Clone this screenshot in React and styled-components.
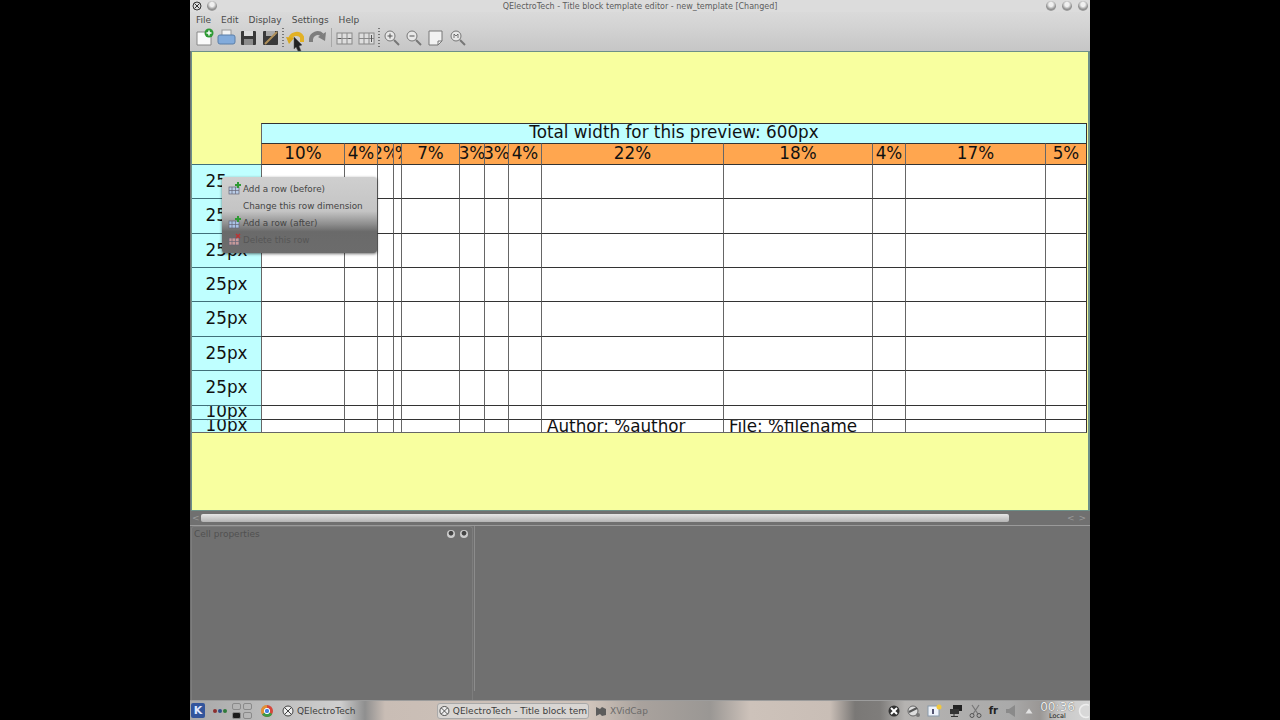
import React from 'react'
import styled, { createGlobalStyle } from 'styled-components'

const Global = createGlobalStyle`
  html, body { margin: 0; padding: 0; background: #000; }
  body { font-family: "DejaVu Sans", sans-serif; }
`

const Screen = styled.div`
  width: 1280px;
  height: 720px;
  display: flex;
  justify-content: center;
  overflow: hidden;
  background: #000;
`
const Desktop = styled.div`
  width: 900px;
  height: 720px;
  display: flex;
  flex-direction: column;
  position: relative;
  background: #707070;
`
const TitleBar = styled.div`
  height: 12px;
  display: flex;
  align-items: center;
  justify-content: space-between;
  padding: 0 2px;
  background: #dcdcdc;
`
const TitleGroup = styled.div`
  width: 42px;
  display: flex;
  align-items: center;
  justify-content: ${p => (p.$right ? 'flex-end' : 'flex-start')};
  gap: ${p => (p.$right ? '6px' : '5px')};
`
const TitleText = styled.div`
  font-size: 8px;
  color: #5c5c5c;
  white-space: nowrap;
`
const WinDot = styled.div`
  width: 10px;
  height: 10px;
  border-radius: 50%;
  background: radial-gradient(circle at 50% 35%, #f0f0f0 0 25%, #8f8f8f 60%, #b5b5b5 100%);
`
const MenuBar = styled.div`
  height: 15px;
  display: flex;
  align-items: center;
  gap: 10px;
  padding-left: 6px;
  background: linear-gradient(#dadada, #d3d3d3);
  font-size: 9px;
  color: #4a4a4a;
`
const Toolbar = styled.div`
  height: 24px;
  box-sizing: border-box;
  padding: 0 0 3px 5px;
  display: flex;
  align-items: center;
  gap: 3px;
  background: linear-gradient(#d3d3d3, #c6c6c6);
`
const ToolIcon = styled.svg`
  width: 19px;
  height: 19px;
  flex: none;
`
const Grip = styled.div`
  width: 2px;
  height: 19px;
  margin: 0 -1px;
  background: repeating-linear-gradient(#777 0 1px, transparent 1px 3px);
`
const ToolSep = styled.div`
  width: 1px;
  height: 19px;
  margin: 0 0 0 1px;
  background: #a8a8a8;
`
const Canvas = styled.div`
  height: 460px;
  margin: 0 0 0 1px;
  box-sizing: border-box;
  border: 1px solid #6d9088;
  border-right-width: 2px;
  background: #f8ff9f;
  padding-top: 71px;
`
const Sheet = styled.div`
  display: grid;
  width: 895px;
  grid-template-columns: 69px 83px 33px 16px 8px 58px 25px 24px 33px 182px 149px 33px 140px 42px;
  grid-template-rows: 20px 21px 34px 35px 34px 34px 35px 34px 35px 14px 14px;
  color: #111;
  font-size: 16.8px;
`
const Corner = styled.div`
  grid-row: 1 / 3;
  grid-column: 1;
`
const Cell = styled.div`
  box-sizing: border-box;
  display: flex;
  align-items: center;
  justify-content: ${p => (p.$left ? 'flex-start' : 'center')};
  padding-left: ${p => (p.$left ? '5px' : '0')};
  padding-bottom: ${p => p.$lift || 2}px;
  overflow: hidden;
  white-space: nowrap;
  background: ${p => p.$bg || '#fff'};
  border-top: 1px solid #333;
  border-left: 1px solid #666;
  ${p => p.$span && 'grid-column: 2 / -1;'}
  ${p => p.$end && 'border-right: 1px solid #3a3030;'}
  ${p => p.$last && 'border-bottom: 1px solid #666;'}
`
const RowHead = styled(Cell)`
  background: #bfffff;
  border-left: none;
  border-top: 1px solid #40707a;
`
const ScrollRow = styled.div`
  height: 14px;
  display: flex;
  align-items: center;
  padding: 0 4px 0 2px;
  gap: 2px;
  color: #9a9a9a;
  font-size: 9px;
`
const ScrollThumb = styled.div`
  width: 808px;
  height: 8px;
  margin-left: -1px;
  border-radius: 2px;
  background: linear-gradient(#e6e6e6, #b4b4b4);
`
const ScrollEnd = styled.div`
  margin-left: auto;
  display: flex;
  gap: 4px;
`
const DockArea = styled.div`
  flex: 1;
  display: flex;
  border-top: 1px solid #9a9a9a;
`
const DockPanel = styled.div`
  width: 282px;
  box-sizing: border-box;
  display: flex;
  justify-content: space-between;
  padding: 2px 4px 0 2px;
  margin-left: 1px;
  border: 1px solid #7d7d7d;
  border-bottom: none;
  border-radius: 3px 3px 0 0;
  font-size: 9px;
  color: #505050;
`
const DockButtons = styled.div`
  display: flex;
  gap: 5px;
  margin-top: 1px;
`
const DockDot = styled.div`
  width: 8px;
  height: 8px;
  border-radius: 50%;
  background: radial-gradient(circle at 50% 40%, #444 0 30%, #ccc 45%);
`
const Splitter = styled.div`
  width: 1px;
  height: 165px;
  margin-left: 1px;
  background: #8c8c8c;
`
const TaskBar = styled.div`
  height: 20px;
  display: flex;
  align-items: center;
  border-top: 1px solid #9c9c9c;
  box-sizing: border-box;
  font-size: 9px;
  color: #3e3e3e;
  background: linear-gradient(90deg, #a8a8a8 0, #cfcfcf 150px, #8f8f8f 175px, #c9bdb5 195px, #d0c4bb 400px, #a9a29d 450px, #9a9794 520px, #cdc2ba 560px, #c9beb6 640px, #7a7876 665px, #7f7d7b 690px, #b5b3b1 715px, #aaaaaa 820px, #9a9795 850px, #c8c8c8 870px, #d5d5d5 900px);
`
const KMenu = styled.div`
  width: 14px;
  height: 15px;
  margin-left: 1px;
  border-radius: 2px;
  background: #33559c;
  color: #dfe8ff;
  font-weight: 700;
  font-size: 11px;
  text-align: center;
  line-height: 15px;
`
const Dots = styled.div`
  display: flex;
  gap: 1px;
  margin-left: 8px;
`
const Dot = styled.div`
  width: 4px;
  height: 4px;
  border-radius: 50%;
  background: ${p => p.$c};
`
const Pager = styled.div`
  display: grid;
  grid-template-columns: 9px 9px;
  grid-auto-rows: 7px;
  gap: 2px;
  margin-left: 5px;
`
const Desk = styled.div`
  border: 1px solid #8a8a8a;
  border-radius: 2px;
  background: ${p => (p.$on ? '#1c1c1c' : 'transparent')};
`
const ChromeMark = styled.svg`
  width: 14px;
  height: 14px;
  margin-left: 8px;
  flex: none;
`
const TaskItem = styled.div`
  display: flex;
  align-items: center;
  gap: 3px;
  height: 16px;
  box-sizing: border-box;
  padding: 0 ${p => (p.$active ? 1 : 3)}px;
  margin-left: ${p => p.$gap}px;
  width: ${p => p.$w}px;
  overflow: hidden;
  white-space: nowrap;
  color: ${p => (p.$dim ? '#6a6a6a' : 'inherit')};
  ${p => p.$active && 'border: 1px solid #a9a9a9; border-radius: 3px; background: #d9d6d3;'}
`
const Tray = styled.div`
  margin-left: auto;
  display: flex;
  align-items: center;
  gap: 6.5px;
  padding-right: 1px;
`
const Lang = styled.span`
  font-size: 10px;
  font-weight: 700;
  color: #222;
`
const Clock = styled.div`
  width: 36px;
  text-align: center;
  color: #eee;
  font-size: 12px;
  line-height: 11px;
  white-space: nowrap;
  text-shadow: 0 0 1px #444;
`
const ClockZone = styled.div`
  font-size: 6.500px;
  line-height: 6px;
  color: #222;
  text-shadow: none;
`
const TrayArc = styled.svg`
  width: 12px;
  height: 16px;
  margin-left: -5px;
  flex: none;
`
const Popup = styled.div`
  position: absolute;
  left: 32px;
  top: 177px;
  width: 155px;
  height: 76px;
  box-sizing: border-box;
  padding: 3px 0 0 6px;
  border-radius: 3px;
  background: linear-gradient(#cfcfcf 0, #c4c4c4 45%, #8e8e8e 62%, #6a6a6a 72%, #6c6c6c 100%);
  box-shadow: 0 1px 3px rgba(0, 0, 0, 0.55);
`
const PopupRow = styled.div`
  height: 17px;
  display: flex;
  align-items: center;
  gap: 2px;
  font-size: 8.800px;
  color: ${p => (p.$off ? '#565656' : '#444')};
`
const PopupIcon = styled.svg`
  width: 13px;
  height: 13px;
  flex: none;
`
const Pointer = styled.svg`
  position: absolute;
  left: 102px;
  top: 36px;
  width: 12px;
  height: 16px;
`

const percents = ['10%', '4%', '2%', '1%', '7%', '3%', '3%', '4%', '22%', '18%', '4%', '17%', '5%']
const rowHeights = ['25px', '25px', '25px', '25px', '25px', '25px', '25px', '10px', '10px']

const GridGlyph = ({ mark }) => (
  <>
    <rect x="2" y="5" width="15" height="11" fill="#dedede" stroke="#888" />
    <path d="M7 5v11M12 5v11M2 10.500h15" stroke="#888" />
    {mark}
  </>
)

const PopupGlyph = ({ color, mark }) => (
  <PopupIcon viewBox="0 0 13 13">
    <rect x="1" y="5" width="10" height="7" fill={color} stroke="#667" strokeWidth="0.7" />
    <path d="M4 5v7M7.500 5v7M1 8.500h10" stroke="#667" strokeWidth="0.7" />
    {mark}
  </PopupIcon>
)

const QetMark = () => (
  <svg width="12" height="12" viewBox="0 0 12 12">
    <circle cx="6" cy="6" r="5" fill="#eee" stroke="#444" />
    <path d="M2.500 2.500l7 7M9.500 2.500l-7 7" stroke="#444" />
  </svg>
)

const plus = <path d="M10 0v6M7 3h6" stroke="#2f9a35" strokeWidth="2" />
const cross = <path d="M8 1l4 4M12 1l-4 4" stroke="#b33" strokeWidth="1.500" />

export default function App() {
  return (
    <Screen>
      <Global />
      <Desktop>
        <TitleBar>
          <TitleGroup>
            <svg width="10" height="10" viewBox="0 0 10 10">
              <circle cx="5" cy="5" r="4" fill="none" stroke="#333" />
              <path d="M2.500 2.500l5 5M7.500 2.500l-5 5" stroke="#333" />
            </svg>
            <WinDot />
          </TitleGroup>
          <TitleText>QElectroTech - Title block template editor - new_template [Changed]</TitleText>
          <TitleGroup $right>
            <WinDot />
            <WinDot />
            <WinDot />
          </TitleGroup>
        </TitleBar>
        <MenuBar>
          <span>File</span>
          <span>Edit</span>
          <span>Display</span>
          <span>Settings</span>
          <span>Help</span>
        </MenuBar>
        <Toolbar>
          <ToolIcon viewBox="0 0 19 19">
            <path d="M2 4h10l4 4v9H2z" fill="#fafafa" stroke="#888" />
            <circle cx="14" cy="5" r="4.500" fill="#2f9a35" />
            <path d="M14 2.500v5M11.500 5h5" stroke="#fff" strokeWidth="1.500" />
          </ToolIcon>
          <ToolIcon viewBox="0 0 19 19">
            <rect x="5" y="2" width="9" height="6" fill="#f4f4f4" stroke="#999" />
            <rect x="1" y="7" width="17" height="9" rx="2" fill="#82abdb" stroke="#5b7fa8" />
          </ToolIcon>
          <ToolIcon viewBox="0 0 19 19">
            <rect x="2" y="3" width="15" height="14" rx="1" fill="#3a3a3a" />
            <rect x="5" y="3" width="9" height="5" fill="#ddd" />
            <rect x="5" y="11" width="9" height="6" fill="#8c8c8c" />
          </ToolIcon>
          <ToolIcon viewBox="0 0 19 19">
            <rect x="2" y="3" width="15" height="14" rx="1" fill="#3a3a3a" />
            <rect x="5" y="3" width="9" height="5" fill="#aaa" />
            <path d="M4 16L16 4" stroke="#b0905a" strokeWidth="2" />
          </ToolIcon>
          <Grip />
          <ToolIcon viewBox="0 0 19 19">
            <path d="M4 12A6.500 6.500 0 0 1 16 9l0 5" fill="none" stroke="#e2b125" strokeWidth="4" />
            <path d="M0 9l8 1-5 6z" fill="#d9a81f" />
          </ToolIcon>
          <ToolIcon viewBox="0 0 19 19">
            <path d="M3 14V11A6.500 6.500 0 0 1 14 7" fill="none" stroke="#7d7d7d" strokeWidth="4" />
            <path d="M18 4l-1 9-7-4z" fill="#7d7d7d" />
          </ToolIcon>
          <ToolSep />
          <ToolIcon viewBox="0 0 19 19"><GridGlyph mark={<path d="M3.500 10.500h2.500M13.500 10.500h2" stroke="#555" />} /></ToolIcon>
          <ToolIcon viewBox="0 0 19 19"><GridGlyph mark={<path d="M14.500 7v7" stroke="#555" />} /></ToolIcon>
          <Grip />
          <ToolIcon viewBox="0 0 19 19">
            <circle cx="8" cy="8" r="5" fill="#e8e8e8" stroke="#777" />
            <path d="M12 12l5 5" stroke="#777" strokeWidth="2" />
            <path d="M5.500 8h5M8 5.500v5" stroke="#555" />
          </ToolIcon>
          <ToolIcon viewBox="0 0 19 19">
            <circle cx="8" cy="8" r="5" fill="#e8e8e8" stroke="#777" />
            <path d="M12 12l5 5" stroke="#777" strokeWidth="2" />
            <path d="M5.500 8h5" stroke="#555" />
          </ToolIcon>
          <ToolIcon viewBox="0 0 19 19">
            <path d="M3 3h13v10l-4 4H3z" fill="#f2f2f2" stroke="#777" />
            <path d="M12 17v-4h4" fill="none" stroke="#777" />
          </ToolIcon>
          <ToolIcon viewBox="0 0 19 19">
            <circle cx="8" cy="8" r="5" fill="#e8e8e8" stroke="#777" />
            <path d="M12 12l5 5" stroke="#777" strokeWidth="2" />
            <path d="M6 10V6l2 2 2-2v4" fill="none" stroke="#555" strokeWidth="0.800" />
          </ToolIcon>
        </Toolbar>
        <Canvas>
          <Sheet>
            <Corner />
            <Cell $span $end $bg="#bfffff" $lift={4}>Total width for this preview: 600px</Cell>
            {percents.map((p, i) => (
              <Cell key={i} $bg="#ffa64f" $end={i === percents.length - 1}>{p}</Cell>
            ))}
            {rowHeights.map((h, r) => (
              <React.Fragment key={r}>
                <RowHead $last={r === 8} $lift={r > 6 ? 3 : 2}>{h}</RowHead>
                {percents.map((_, c) => (
                  <Cell
                    key={c}
                    $end={c === percents.length - 1}
                    $last={r === 8}
                    $lift={1}
                    $left={r === 8 && (c === 8 || c === 9)}
                  >
                    {r === 8 && c === 8 && 'Author: %author'}
                    {r === 8 && c === 9 && 'File: %filename'}
                  </Cell>
                ))}
              </React.Fragment>
            ))}
          </Sheet>
        </Canvas>
        <ScrollRow>
          <span>&lt;</span>
          <ScrollThumb />
          <ScrollEnd>
            <span>&lt;</span>
            <span>&gt;</span>
          </ScrollEnd>
        </ScrollRow>
        <DockArea>
          <DockPanel>
            <span>Cell properties</span>
            <DockButtons>
              <DockDot />
              <DockDot />
            </DockButtons>
          </DockPanel>
          <Splitter />
        </DockArea>
        <TaskBar>
          <KMenu>K</KMenu>
          <Dots>
            <Dot $c="#8c2f2f" />
            <Dot $c="#2f4f8c" />
            <Dot $c="#2f7a3a" />
          </Dots>
          <Pager>
            <Desk />
            <Desk />
            <Desk $on />
            <Desk />
          </Pager>
          <ChromeMark viewBox="0 0 14 14">
            <circle cx="7" cy="7" r="6" fill="#d6463a" />
            <path d="M7 7L12.200 10A6 6 0 0 1 2 10.300z" fill="#3d9a46" />
            <path d="M7 7L2 10.300A6 6 0 0 1 7 1z" fill="#e9c22f" opacity="0.600" />
            <circle cx="7" cy="7" r="2.700" fill="#4b84e0" stroke="#fff" />
          </ChromeMark>
          <TaskItem $gap={5} $w={90}>
            <QetMark />
            QElectroTech
          </TaskItem>
          <TaskItem $active $gap={68} $w={152}>
            <QetMark />
            QElectroTech - Title block tem
          </TaskItem>
          <TaskItem $dim $gap={3} $w={70}>
            <svg width="12" height="12" viewBox="0 0 12 12">
              <path d="M1 2l4 2 2-2 4 2v6l-4 1-2-2-4 2z" fill="#5c5c5c" />
            </svg>
            XVidCap
          </TaskItem>
          <Tray>
            <svg width="12" height="12" viewBox="0 0 12 12">
              <circle cx="6" cy="6" r="5.500" fill="#333" />
              <path d="M3 3l6 6M9 3l-6 6" stroke="#fff" strokeWidth="2" />
            </svg>
            <svg width="14" height="14" viewBox="0 0 14 14">
              <circle cx="6" cy="7" r="5" fill="#ddd" stroke="#666" />
              <path d="M2 8l8-4" stroke="#555" strokeWidth="2" />
              <circle cx="11" cy="11" r="2" fill="#777" />
            </svg>
            <svg width="15" height="13" viewBox="0 0 15 13">
              <rect x="1" y="2" width="11" height="10" fill="#eef2fa" stroke="#89a" />
              <path d="M6 5v5" stroke="#224" strokeWidth="1.500" />
              <circle cx="12" cy="3" r="2.500" fill="#f2c83c" />
            </svg>
            <svg width="14" height="13" viewBox="0 0 14 13">
              <rect x="4" y="1" width="9" height="6" fill="#222" />
              <rect x="1" y="5" width="9" height="5" fill="#333" />
              <path d="M5 10v3M2 12.500h7" stroke="#333" />
            </svg>
            <svg width="13" height="14" viewBox="0 0 13 14">
              <path d="M3 1l6 9M10 1L4 10" stroke="#777" strokeWidth="1.200" />
              <circle cx="3" cy="11.500" r="2" fill="none" stroke="#555" />
              <circle cx="10" cy="11.500" r="2" fill="none" stroke="#555" />
            </svg>
            <Lang>fr</Lang>
            <svg width="14" height="14" viewBox="0 0 14 14">
              <path d="M1 5h3l6-4v12l-6-4H1z" fill="#8a8a8a" />
            </svg>
            <svg width="8" height="8" viewBox="0 0 8 8">
              <path d="M4 1.500L7.500 6.500h-7z" fill="#e2e2e2" />
            </svg>
            <Clock>
              00:36
              <ClockZone>Local</ClockZone>
            </Clock>
            <TrayArc viewBox="0 0 12 16">
              <circle cx="9" cy="8" r="6.500" fill="#d8d8d8" stroke="#eee" strokeWidth="1.500" />
            </TrayArc>
          </Tray>
        </TaskBar>
        <Popup>
          <PopupRow>
            <PopupGlyph color="#b9cce6" mark={plus} />
            Add a row (before)
          </PopupRow>
          <PopupRow>
            <PopupIcon viewBox="0 0 13 13" />
            Change this row dimension
          </PopupRow>
          <PopupRow>
            <PopupGlyph color="#a9c2e4" mark={plus} />
            Add a row (after)
          </PopupRow>
          <PopupRow $off>
            <PopupGlyph color="#c79a9a" mark={cross} />
            Delete this row
          </PopupRow>
        </Popup>
        <Pointer viewBox="0 0 12 16">
          <path d="M2 1l8 8-3 1 2 5-3 0-2-4-2 2z" fill="#222" stroke="#555" strokeWidth="0.500" />
        </Pointer>
      </Desktop>
    </Screen>
  )
}
